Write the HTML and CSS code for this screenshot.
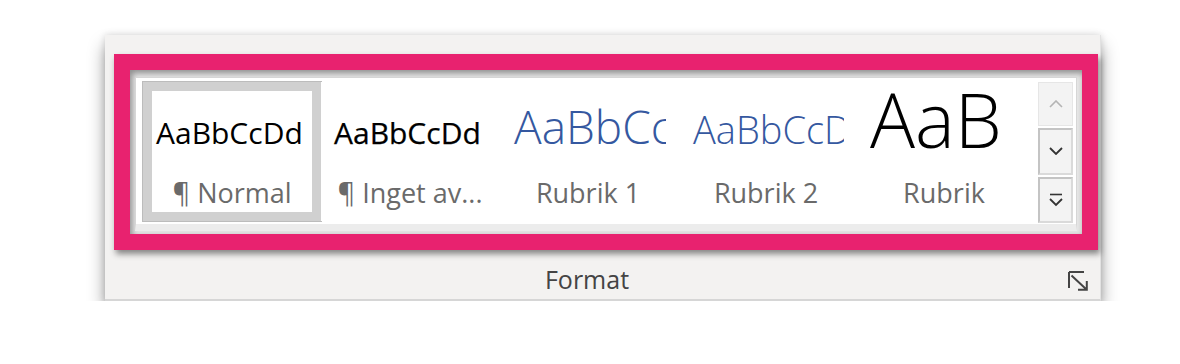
FILE: index.html
```html
<!DOCTYPE html>
<html lang="sv">
<head>
<meta charset="utf-8">
<title>Format</title>
<link rel="stylesheet" href="styles.css">
</head>
<body>
<div class="stage">
  <section class="panel">
    <div class="highlight">
      <div class="gallery">
        <ul class="styles">
          <li class="item selected">
            <div class="sample s-normal">AaBbCcDd</div>
            <div class="label">¶ Normal</div>
          </li>
          <li class="item">
            <div class="sample s-nospace">AaBbCcDd</div>
            <div class="label">¶ Inget av...</div>
          </li>
          <li class="item">
            <div class="sample s-h1">AaBbCc</div>
            <div class="label">Rubrik 1</div>
          </li>
          <li class="item">
            <div class="sample s-h2">AaBbCcD</div>
            <div class="label">Rubrik 2</div>
          </li>
          <li class="item">
            <div class="sample s-title">AaB</div>
            <div class="label">Rubrik</div>
          </li>
        </ul>
        <div class="scroller">
          <button class="sbtn disabled" aria-label="Upp">
            <svg width="14" height="8" viewBox="0 0 14 8"><path d="M1 7 L7 1 L13 7" fill="none" stroke="#b4b4b4" stroke-width="1.6"/></svg>
          </button>
          <button class="sbtn bordered" aria-label="Ned">
            <svg width="14" height="8" viewBox="0 0 14 8"><path d="M1 1 L7 7 L13 1" fill="none" stroke="#333" stroke-width="1.8"/></svg>
          </button>
          <button class="sbtn bordered" aria-label="Mer">
            <svg width="14" height="14" viewBox="0 0 14 14"><path d="M1 1.5 H13" stroke="#333" stroke-width="1.6"/><path d="M1 6 L7 12 L13 6" fill="none" stroke="#333" stroke-width="1.8"/></svg>
          </button>
        </div>
      </div>
    </div>
    <footer class="group-footer">
      <span class="group-name">Format</span>
      <svg class="launcher" width="20" height="20" viewBox="0 0 20 20"><path d="M1 1 H16 M1 1 V17 M3.5 4.5 L18.5 18.5 M10 18.8 H18.8 V10" fill="none" stroke="#444" stroke-width="2"/></svg>
    </footer>
  </section>
</div>
</body>
</html>
```

FILE: styles.css
```css
* { box-sizing: border-box; }
html, body { margin: 0; padding: 0; background: #ffffff; }
body { font-family: "Open Sans", "Noto Sans", sans-serif; }

.stage {
  padding: 35px 0 0 105px;
}

.panel {
  width: 996px;
  height: 266px;
  background: #f3f2f1;
  padding: 19px 3px 0 9px;
  border-right: 1px solid #e2e2e2;
  border-bottom: 2px solid #d6d6d6;
  box-shadow: 0 11px 16px rgba(0,0,0,0.38), 0 0 7px rgba(0,0,0,0.14);
  display: flex;
  flex-direction: column;
}

.highlight {
  width: 984px;
  height: 196px;
  border: 16px solid #e8226f;
  padding: 7px 5px 3px 5px;
  background: #e6e6e6;
  box-shadow: 2px 4px 6px rgba(0,0,0,0.45), inset 2px 3px 6px rgba(0,0,0,0.4);
}

.gallery {
  height: 154px;
  border: 1px solid #d6d6d6;
  border-bottom: 7px solid #ececec;
  background: #ffffff;
  padding: 4px 3px 1px 7px;
  display: flex;
  gap: 5px;
}

.styles {
  list-style: none;
  margin: 0;
  padding: 0;
  display: flex;
}

.item {
  width: 178px;
  height: 139px;
  border: 9px solid #ffffff;
  display: flex;
  flex-direction: column;
}

.item.selected {
  border-color: #d0d0d0;
  box-shadow: 0 0 0 1px #bcbcbc;
}

.sample {
  height: 86px;
  padding: 0 2px 0 4px;
  white-space: nowrap;
  line-height: 0;
  color: #000;
  clip-path: inset(-30px 2px -30px 0);
}
.sample::before {
  content: "";
  display: inline-block;
  height: 53px;
  width: 0;
  vertical-align: baseline;
}

.s-normal, .s-nospace { font-size: 30px; }
.s-nospace { -webkit-text-stroke: 0.25px #000; }
.s-h1 { font-size: 46px; font-weight: 300; color: #3558a0; padding-left: 6px; }
.s-h2 { font-size: 38px; font-weight: 300; color: #3558a0; padding-left: 7px; }
.s-title { font-size: 75px; font-weight: 300; padding-left: 6px; }
.s-title::before { height: 57px; }

.label {
  height: 30px;
  line-height: 32px;
  font-size: 27px;
  color: #6a6a6a;
  text-align: center;
  white-space: nowrap;
}

.scroller {
  width: 35px;
  display: flex;
  flex-direction: column;
  gap: 2px;
}

.sbtn {
  flex: 1;
  margin: 0;
  padding: 0;
  background: #f3f3f3;
  border: 1px solid #e6e6e6;
  display: flex;
  align-items: center;
  justify-content: center;
}
.sbtn.bordered {
  border: 2px solid #c4c4c4;
  border-right-color: #dadada;
  border-bottom-color: #dadada;
}

.group-footer {
  flex: 1;
  display: flex;
  align-items: center;
  padding: 6px 9px 0 0;
}
.group-name {
  flex: 1;
  text-align: center;
  font-size: 25px;
  color: #444;
  padding-right: 8px;
  padding-top: 2px;
}
.launcher { display: block; margin-top: 6px; }
```
